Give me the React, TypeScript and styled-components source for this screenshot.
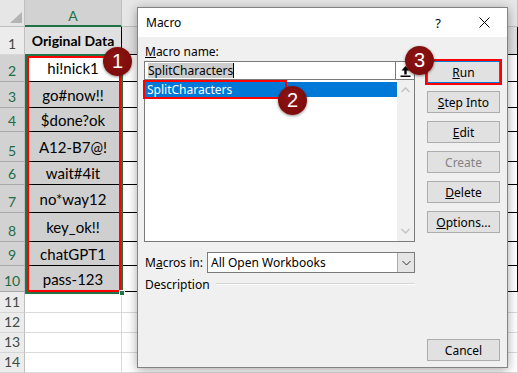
import styled, { createGlobalStyle } from 'styled-components';

const GlobalStyle = createGlobalStyle`
  html, body {
    margin: 0;
    padding: 0;
  }
  body {
    width: 518px;
    height: 373px;
    overflow: hidden;
    background: #fff;
    font-family: "Noto Sans", "Open Sans", sans-serif;
  }
`;

interface IRow {
  n: number;
  h: number;
  text?: string;
  head?: boolean;
  sel?: boolean;
  active?: boolean;
}

const rows: IRow[] = [
  { n: 1, h: 28, text: 'Original Data', head: true },
  { n: 2, h: 27, text: 'hi!nick1', sel: true, active: true },
  { n: 3, h: 26, text: 'go#now!!', sel: true },
  { n: 4, h: 24, text: '$done?ok', sel: true },
  { n: 5, h: 30, text: 'A12-B7@!', sel: true },
  { n: 6, h: 23, text: 'wait#4it', sel: true },
  { n: 7, h: 28, text: 'no*way12', sel: true },
  { n: 8, h: 29, text: 'key_ok!!', sel: true },
  { n: 9, h: 24, text: 'chatGPT1', sel: true },
  { n: 10, h: 26, text: 'pass-123', sel: true },
  { n: 11, h: 21 },
  { n: 12, h: 20 },
  { n: 13, h: 20 },
  { n: 14, h: 20 },
];

const buttons = [
  { label: 'Run', key: 'R', rest: 'un', primary: true },
  { label: 'Step Into', key: 'S', rest: 'tep Into' },
  { label: 'Edit', key: 'E', rest: 'dit' },
  { label: 'Create', key: '', rest: 'Create', disabled: true },
  { label: 'Delete', key: 'D', rest: 'elete' },
  { label: 'Options...', key: 'O', rest: 'ptions...' },
];

function App() {
  const rowTemplate = ['27px', ...rows.map((r) => `${r.h}px`)].join(' ');
  return (
    <Screen>
      <GlobalStyle />
      <Sheet rowTemplate={rowTemplate}>
        <Corner />
        <ColHeader selected>A</ColHeader>
        <ColHeader />
        {rows.map((r) => {
          const inTable = r.n <= 10;
          return [
            <RowHeader key={`h${r.n}`} selected={!!r.sel}>
              {r.n}
            </RowHeader>,
            <Cell
              key={`a${r.n}`}
              fill={r.head ? '#e0e0e0' : r.sel && !r.active ? '#cfcfcf' : '#fff'}
              bold={!!r.head}
              table={inTable}
            >
              {r.text}
            </Cell>,
            <Cell key={`b${r.n}`} fill={r.head ? '#e0e0e0' : '#fff'} table={inTable} />,
          ];
        })}
      </Sheet>

      <SelectionBox>
        <RedFrame />
      </SelectionBox>
      <FillHandle />

      <Dialog>
        <TitleBar>
          <TitleText>Macro</TitleText>
          <TitleButton>?</TitleButton>
          <TitleButton>
            <svg width="11" height="11" viewBox="0 0 11 11">
              <path d="M0.5 0.5 L10.5 10.5 M10.5 0.5 L0.5 10.5" stroke="#000" strokeWidth="1" />
            </svg>
          </TitleButton>
        </TitleBar>
        <Client>
          <LeftCol>
            <FieldLabel>
              <u>M</u>acro name:
            </FieldLabel>
            <NameRow>
              <NameInput>
                <SelectedText>SplitCharacters</SelectedText>
                <Caret />
              </NameInput>
              <UpButton>
                <svg width="11" height="12" viewBox="0 0 11 12">
                  <path d="M5.5 1 L1.5 5.5 L4.3 5.5 L4.3 9.5 L6.7 9.5 L6.7 5.5 L9.5 5.5 Z" fill="#000" />
                  <rect x="0.5" y="10.5" width="10" height="1.5" fill="#000" />
                </svg>
              </UpButton>
            </NameRow>
            <ListBox>
              <ListItems>
                <ListItem selected>SplitCharacters</ListItem>
              </ListItems>
              <ScrollBar>
                <svg width="9" height="6" viewBox="0 0 9 6">
                  <path d="M0.5 5 L4.5 1 L8.5 5" stroke="#c2c2c2" strokeWidth="1.4" fill="none" />
                </svg>
                <svg width="9" height="6" viewBox="0 0 9 6">
                  <path d="M0.5 1 L4.5 5 L8.5 1" stroke="#c2c2c2" strokeWidth="1.4" fill="none" />
                </svg>
              </ScrollBar>
            </ListBox>
            <MacrosRow>
              <InlineLabel>
                M<u>a</u>cros in:
              </InlineLabel>
              <Combo>
                <ComboText>All Open Workbooks</ComboText>
                <ComboButton>
                  <svg width="9" height="6" viewBox="0 0 9 6">
                    <path d="M0.5 1 L4.5 5 L8.5 1" stroke="#333" strokeWidth="1" fill="none" />
                  </svg>
                </ComboButton>
              </Combo>
            </MacrosRow>
            <DescRow>
              <span>Description</span>
              <GroupLine />
            </DescRow>
          </LeftCol>
          <RightCol>
            {buttons.map((b) => (
              <DialogButton key={b.label} primary={!!b.primary} disabled={!!b.disabled}>
                {b.key && <u>{b.key}</u>}
                {b.rest}
              </DialogButton>
            ))}
            <CancelButton>Cancel</CancelButton>
          </RightCol>
        </Client>
      </Dialog>

      <ItemFrame />
      <Badge x={103} y={47}>1</Badge>
      <Badge x={278} y={86}>2</Badge>
      <Badge x={405} y={46}>3</Badge>
    </Screen>
  );
}

const Screen = styled.div`
  position: relative;
  width: 518px;
  height: 373px;
  overflow: hidden;
`;

interface ISheet {
  rowTemplate: string;
}

const Sheet = styled.div<ISheet>`
  display: grid;
  grid-template-columns: 25px 97px 1fr;
  grid-template-rows: ${(props) => props.rowTemplate};
  width: 518px;
  height: 373px;
  font-family: Lato, "Liberation Sans", sans-serif;
  color: #000;
`;

const Corner = styled.div`
  position: relative;
  background: #e6e6e6;
  border-right: 1px solid #bfbfbf;
  border-bottom: 1px solid #bfbfbf;
  box-sizing: border-box;

  &::after {
    content: '';
    position: absolute;
    right: 2px;
    bottom: 3px;
    width: 12px;
    height: 11px;
    background: #b4b4b4;
    clip-path: polygon(100% 0, 100% 100%, 0 100%);
  }
`;

interface ISelected {
  selected?: boolean;
}

const ColHeader = styled.div<ISelected>`
  display: flex;
  align-items: center;
  justify-content: center;
  box-sizing: border-box;
  padding-top: 6px;
  background: ${(props) => (props.selected ? '#d2d2d2' : '#e6e6e6')};
  border-right: 1px solid #bfbfbf;
  border-bottom: ${(props) => (props.selected ? '2px solid #217346' : '1px solid #bfbfbf')};
  color: ${(props) => (props.selected ? '#217346' : '#444')};
  font-size: 14px;
`;

const RowHeader = styled.div<ISelected>`
  display: flex;
  align-items: flex-end;
  justify-content: center;
  box-sizing: border-box;
  padding-bottom: 1px;
  background: ${(props) => (props.selected ? '#d2d2d2' : '#ececec')};
  border-right: 1px solid #bfbfbf;
  border-bottom: 1px solid ${(props) => (props.selected ? '#a8a8a8' : '#d6d6d6')};
  color: ${(props) => (props.selected ? '#1d6b45' : '#3f4a45')};
  font-size: 14px;
  line-height: 18px;
`;

interface ICell {
  fill: string;
  bold?: boolean;
  table: boolean;
}

const Cell = styled.div<ICell>`
  display: flex;
  align-items: center;
  justify-content: center;
  box-sizing: border-box;
  background: ${(props) => props.fill};
  border-bottom: 1px solid ${(props) => (props.table ? '#000' : '#dadada')};
  border-right: 1px solid ${(props) => (props.table ? '#000' : '#dadada')};
  font-size: ${(props) => (props.bold ? 14 : 15)}px;
  font-weight: ${(props) => (props.bold ? 700 : 400)};
  white-space: nowrap;
`;

const SelectionBox = styled.div`
  position: absolute;
  left: 25px;
  top: 54px;
  width: 98px;
  height: 240px;
  box-sizing: border-box;
  border: 2px solid #217346;
`;

const RedFrame = styled.div`
  width: 100%;
  height: 100%;
  box-sizing: border-box;
  border: 2px solid #ff0000;
`;

const FillHandle = styled.div`
  position: absolute;
  left: 119px;
  top: 290px;
  width: 6px;
  height: 6px;
  background: #217346;
  border: 1px solid #fff;
  box-sizing: border-box;
`;

const Dialog = styled.div`
  position: absolute;
  left: 137px;
  top: 7px;
  width: 371px;
  height: 361px;
  box-sizing: border-box;
  display: flex;
  flex-direction: column;
  background: #f0f0f0;
  border: 1px solid #838383;
  box-shadow: 0 2px 10px rgba(0, 0, 0, 0.35);
  font-size: 12px;
  color: #000;
`;

const TitleBar = styled.div`
  display: flex;
  align-items: center;
  height: 29px;
  padding-left: 8px;
  background: #fff;
`;

const TitleText = styled.div`
  flex: 1;
  font-size: 12px;
`;

const TitleButton = styled.div`
  width: 46px;
  height: 29px;
  display: flex;
  align-items: center;
  justify-content: center;
  font-size: 13px;
`;

const Client = styled.div`
  flex: 1;
  display: flex;
  gap: 12px;
  padding: 0 7px 6px 6px;
`;

const LeftCol = styled.div`
  width: 271px;
  display: flex;
  flex-direction: column;
`;

const FieldLabel = styled.div`
  height: 24px;
  box-sizing: border-box;
  padding: 7px 0 0 1px;
  line-height: 16px;
`;

const NameRow = styled.div`
  display: flex;
  height: 19px;
`;

const NameInput = styled.div`
  flex: 1;
  display: flex;
  align-items: center;
  padding-left: 3px;
  background: #fff;
  border: 1px solid #7a7a7a;
  border-right: none;
`;

const SelectedText = styled.span`
  background: #cccccc;
  line-height: 15px;
`;

const Caret = styled.span`
  width: 1px;
  height: 15px;
  background: #000;
`;

const UpButton = styled.div`
  width: 18px;
  display: flex;
  align-items: center;
  justify-content: center;
  background: #fff;
  border: 1px solid #7a7a7a;
`;

const ListBox = styled.div`
  display: flex;
  height: 162px;
  box-sizing: border-box;
  background: #fff;
  border: 1px solid #7a7a7a;
  border-top: none;
`;

const ListItems = styled.div`
  flex: 1;
  padding-top: 2px;
`;

const ListItem = styled.div<ISelected>`
  height: 15px;
  line-height: 15px;
  padding-left: 2px;
  background: ${(props) => (props.selected ? '#0078d7' : 'transparent')};
  color: ${(props) => (props.selected ? '#fff' : '#000')};
`;

const ScrollBar = styled.div`
  width: 17px;
  display: flex;
  flex-direction: column;
  align-items: center;
  justify-content: space-between;
  padding: 7px 0 7px;
  background: #f0f0f0;
`;

const MacrosRow = styled.div`
  display: flex;
  align-items: center;
  height: 21px;
  margin-top: 10px;
`;

const InlineLabel = styled.div`
  width: 62px;
  padding-left: 1px;
`;

const Combo = styled.div`
  flex: 1;
  height: 21px;
  box-sizing: border-box;
  display: flex;
  background: #fff;
  border: 1px solid #7a7a7a;
`;

const ComboText = styled.div`
  flex: 1;
  padding-left: 3px;
  line-height: 19px;
`;

const ComboButton = styled.div`
  width: 16px;
  display: flex;
  align-items: center;
  justify-content: center;
  background: #e5e5e5;
  border-left: 1px solid #adadad;
`;

const DescRow = styled.div`
  display: flex;
  align-items: center;
  height: 20px;
  margin-top: 1px;
  padding-left: 1px;
`;

const GroupLine = styled.div`
  flex: 1;
  margin-left: 6px;
  border-top: 1px solid #d5d5d5;
  border-bottom: 1px solid #fff;
`;

const RightCol = styled.div`
  width: 73px;
  display: flex;
  flex-direction: column;
  gap: 8px;
  padding-top: 24px;
`;

interface IButton {
  primary?: boolean;
  disabled?: boolean;
}

const DialogButton = styled.div<IButton>`
  height: 22px;
  box-sizing: border-box;
  display: flex;
  align-items: center;
  justify-content: center;
  background: #e1e1e1;
  border: 1px solid ${(props) => (props.primary ? '#0078d7' : '#adadad')};
  outline: ${(props) => (props.primary ? '2px solid #ff0000' : 'none')};
  outline-offset: 0;
  color: ${(props) => (props.disabled ? '#838383' : '#000')};
`;

const CancelButton = styled(DialogButton)`
  margin-top: auto;
`;

const ItemFrame = styled.div`
  position: absolute;
  left: 143px;
  top: 80px;
  width: 144px;
  height: 19px;
  box-sizing: border-box;
  border: 2px solid #ff0000;
`;

interface IBadge {
  x: number;
  y: number;
}

const Badge = styled.div<IBadge>`
  position: absolute;
  left: ${(props) => props.x}px;
  top: ${(props) => props.y}px;
  width: 29px;
  height: 29px;
  border-radius: 50%;
  display: flex;
  align-items: center;
  justify-content: center;
  background: radial-gradient(circle at 45% 40%, #8e1414, #760808);
  box-shadow: 0 1px 3px rgba(0, 0, 0, 0.45);
  color: #fff;
  font-family: "Liberation Sans", Arial, sans-serif;
  font-size: 20px;
`;

export default App;
